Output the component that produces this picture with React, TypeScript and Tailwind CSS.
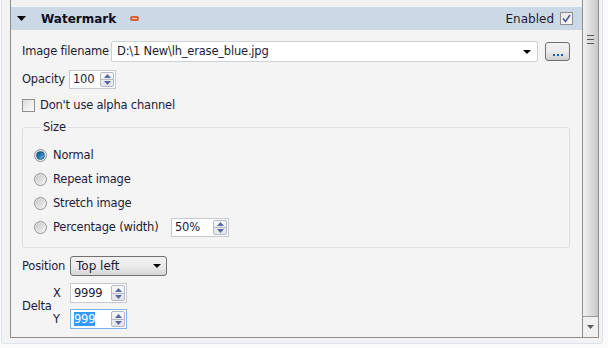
import React from 'react';

const txt = "text-[#1d1b36]";

const Spin = ({ value, width, selected, focused }: { value: string; width: string; selected?: boolean; focused?: boolean }) => (
  <div className={`flex h-full items-stretch bg-white border ${focused ? 'border-[#7eb4ea]' : 'border-[#c5cad1]'} ${width}`}>
    <div className="flex-1 flex items-center pl-[3px]">
      {selected ? (
        <span className="bg-[#3399ff] text-white leading-[14px]">{value}</span>
      ) : (
        <span className={txt}>{value}</span>
      )}
    </div>
    <div className="flex flex-col w-[14px] my-[1px] mr-[1px] border border-[#b4bac5] rounded-[2px] bg-gradient-to-b from-[#f8f8f8] to-[#e2e4e8]">
      <div className="flex-1 flex items-center justify-center border-b border-[#b4bac5]">
        <svg width="7" height="4" viewBox="0 0 7 4"><path d="M3.5 0 L7 4 L0 4 Z" fill="#5868a0" /></svg>
      </div>
      <div className="flex-1 flex items-center justify-center">
        <svg width="7" height="4" viewBox="0 0 7 4"><path d="M0 0 L7 0 L3.5 4 Z" fill="#5868a0" /></svg>
      </div>
    </div>
  </div>
);

const Radio = ({ checked }: { checked?: boolean }) => (
  <div className="w-[13px] h-[13px] rounded-full border border-[#8d9198] bg-gradient-to-br from-[#dcdcdc] to-[#fafafa] flex items-center justify-center">
    <div className={`w-[9px] h-[9px] rounded-full ${checked ? 'bg-gradient-to-br from-[#0f4c7a] via-[#2a7bb8] to-[#7fc4ef] border border-[#1c5f8f]' : 'bg-gradient-to-br from-[#c9c9c9] to-[#f2f2f2]'}`} />
  </div>
);

const radios = [
  { label: "Normal", checked: true },
  { label: "Repeat image" },
  { label: "Stretch image" },
];

export default function App() {
  return (
    <div className="w-[608px] h-[348px] bg-[#fbfbfc] pl-[1px] overflow-hidden font-['DejaVu_Sans',sans-serif] text-[11.5px] tracking-[-0.2px]">
      <div className="w-[602px] h-[344px] border-x border-b border-[#dde3ea] rounded-b-[4px] bg-[#f3f3f3] pl-[8px]">
        <div className="flex h-[338px] w-[589px] border-l border-b border-[#8e8e8e]">
          <div className="flex-1 flex flex-col bg-[#f4f4f4]">
            <div className="h-[7px] bg-[#f1f1f1]" />
            <div className="h-[23px] bg-[#cbd8e5] flex items-center">
              <svg width="9" height="5" viewBox="0 0 9 5" className="ml-[6px]"><path d="M0 0 L9 0 L4.5 5 Z" fill="#000" /></svg>
              <span className="ml-[15px] font-bold text-[12px] text-[#0d0d1c] tracking-[0px]">Watermark</span>
              <div className="ml-[14px] w-[9px] h-[5px] rounded-[2px] bg-[#d9603a] flex items-center justify-center">
                <div className="w-[5px] h-[1px] bg-[#f6c2ae]" />
              </div>
              <span className={`ml-auto ${txt} text-[12px] tracking-[0px]`}>Enabled</span>
              <div className="ml-[6px] mr-[9px] w-[13px] h-[13px] border border-[#8e8f8f] bg-gradient-to-br from-[#e6e6e6] to-[#fbfbfb] flex items-center justify-center">
                <svg width="9" height="9" viewBox="0 0 9 9"><path d="M1 4.5 L3.5 7.5 L8 1" stroke="#4a5c96" strokeWidth="1.6" fill="none" /></svg>
              </div>
            </div>

            <div className="flex flex-col pl-[11px] pr-[11px] pt-[11px]">
              <div className="flex items-center h-[21px]">
                <span className={`${txt} w-[89px]`}>Image filename</span>
                <div className="h-full w-[427px] bg-white border border-[#cdd2d8] rounded-[2px] flex items-center pl-[5px] pr-[6px]">
                  <span className={`${txt} flex-1`}>D:\1 New\lh_erase_blue.jpg</span>
                  <svg width="8" height="4" viewBox="0 0 8 4"><path d="M0 0 L8 0 L4 4 Z" fill="#000" /></svg>
                </div>
                <div className="ml-[7px] w-[25px] h-[19px] border border-[#707070] rounded-[3px] bg-gradient-to-b from-[#f2f2f2] via-[#ebebeb] to-[#cfcfcf] flex items-end justify-center pb-[4px] gap-[2px]">
                  <div className="w-[2px] h-[2px] bg-[#1a5fb4]" />
                  <div className="w-[2px] h-[2px] bg-[#1a5fb4]" />
                  <div className="w-[2px] h-[2px] bg-[#1a5fb4]" />
                </div>
              </div>

              <div className="flex items-center h-[19px] mt-[8px]">
                <span className={`${txt} w-[47px]`}>Opacity</span>
                <Spin value="100" width="w-[47px]" />
              </div>

              <div className="flex items-center h-[13px] mt-[10px]">
                <div className="w-[13px] h-[13px] border border-[#8e8f8f] bg-gradient-to-br from-[#dedede] to-[#fbfbfb]" />
                <span className={`${txt} ml-[5px]`}>Don't use alpha channel</span>
              </div>

              <fieldset className="mt-[7px] w-[548px] border border-[#dcdfe4] rounded-[3px] pl-[11px] pb-[8px] pt-[7px]">
                <legend className={`${txt} ml-[7px] px-[2px]`}>Size</legend>
                {radios.map(r => (
                  <div key={r.label} className="flex items-center h-[24px]">
                    <Radio checked={r.checked} />
                    <span className={`${txt} ml-[6px]`}>{r.label}</span>
                  </div>
                ))}
                <div className="flex items-center h-[24px]">
                  <Radio />
                  <span className={`${txt} ml-[6px] w-[118px]`}>Percentage (width)</span>
                  <div className="h-[19px]"><Spin value="50%" width="w-[58px]" /></div>
                </div>
              </fieldset>

              <div className="flex items-center h-[20px] mt-[8px]">
                <span className={`${txt} w-[48px]`}>Position</span>
                <div className="w-[97px] h-full border border-[#707070] rounded-[3px] bg-gradient-to-b from-[#f2f2f2] via-[#ebebeb] to-[#d6d6d6] flex items-center pl-[5px] pr-[5px]">
                  <span className={`${txt} flex-1 text-[12px] tracking-[0px]`}>Top left</span>
                  <svg width="8" height="4" viewBox="0 0 8 4"><path d="M0 0 L8 0 L4 4 Z" fill="#000" /></svg>
                </div>
              </div>

              <div className="flex items-center mt-[7px]">
                <span className={`${txt} w-[31px]`}>Delta</span>
                <div className="flex flex-col gap-[6px]">
                  <div className="flex items-center h-[20px]">
                    <span className={`${txt} w-[17px]`}>X</span>
                    <Spin value="9999" width="w-[57px]" />
                  </div>
                  <div className="flex items-center h-[20px]">
                    <span className={`${txt} w-[17px]`}>Y</span>
                    <Spin value="999" width="w-[57px]" selected focused />
                  </div>
                </div>
              </div>
            </div>
          </div>

          <div className="w-[17px] flex flex-col border-l border-r border-[#8e8e8e] bg-[#e9e9e9]">
            <div className="h-[317px] border-b border-[#9a9a9a] bg-gradient-to-r from-[#f2f2f2] via-[#dcdcdc] to-[#c9c9c9] flex flex-col items-center pt-[35px] gap-[1px]">
              <div className="w-[7px] h-[1px] bg-[#5a5a5a]" />
              <div className="w-[7px] h-[1px] bg-[#d8d8d8]" />
              <div className="w-[7px] h-[1px] bg-[#5a5a5a]" />
              <div className="w-[7px] h-[1px] bg-[#d8d8d8]" />
              <div className="w-[7px] h-[1px] bg-[#5a5a5a]" />
            </div>
            <div className="flex-1 bg-[#f0f0f0] flex items-center justify-center">
              <svg width="7" height="4" viewBox="0 0 7 4"><path d="M0 0 L7 0 L3.5 4 Z" fill="#5c5c5c" /></svg>
            </div>
          </div>
        </div>
      </div>
    </div>
  );
}
